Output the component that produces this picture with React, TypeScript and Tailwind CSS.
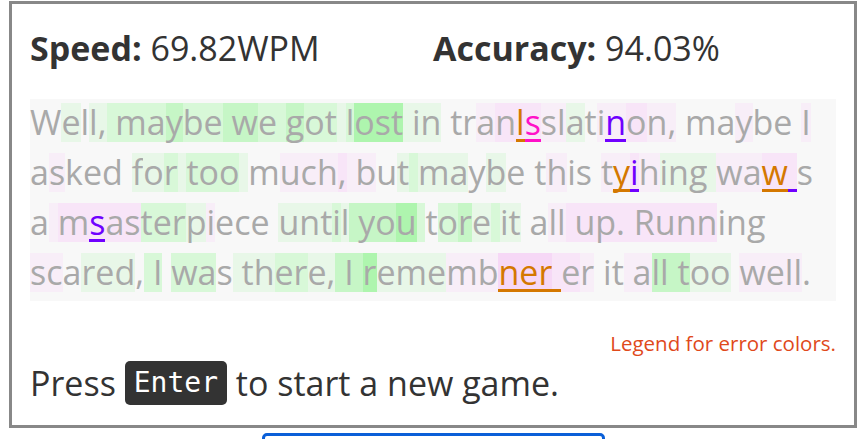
import React from 'react';

type Seg = { text: string; codes: string; err?: 'o' | 'u' | 'm' };

// background shade per typed character
const shade: Record<string, string> = {
  '.': '',
  '1': 'bg-[#e8f7e8]',
  '2': 'bg-[#d8f8d8]',
  '3': 'bg-[#c6f6c6]',
  '4': 'bg-[#aef5ae]',
  a: 'bg-[#f8eef8]',
  b: 'bg-[#f8e5f8]',
  c: 'bg-[#f6d8f6]',
};

const errStyle: Record<string, string> = {
  o: 'text-[#d47800] border-[#d47800]',
  u: 'text-[#7000ff] border-[#7000ff]',
  m: 'text-[#ff10c8] border-[#ff10c8]',
};

const lines: Seg[][] = [
  [
    { text: 'Well, maybe we got lost in tran', codes: ['.1.11', '2', '22322', '3', '32', '2', '322', '1', '2444', '1', '11', '.', '..ab'].join('') },
    { text: 'l', codes: 'b', err: 'o' },
    { text: 's', codes: 'b', err: 'm' },
    { text: 'slati', codes: 'aa1.a' },
    { text: 'n', codes: 'a', err: 'u' },
    { text: 'on, maybe I', codes: ['baa', '.', '..a..', '.', 'a'].join('') },
  ],
  [
    { text: 'asked for too much, but maybe this t', codes: ['.a...', '.', '112', '1', '222', '1', '.aaab', 'a', 'a.1', '2', '11.1.', '.', '.a..', '.', 'a'].join('') },
    { text: 'y', codes: 'a', err: 'o' },
    { text: 'i', codes: 'b', err: 'u' },
    { text: 'hing wa', codes: 'a1111aa' },
    { text: 'w', codes: 'b', err: 'o' },
    { text: ' ', codes: 'b', err: 'u' },
    { text: 's', codes: '.' },
  ],
  [
    { text: 'a m', codes: '.ab' },
    { text: 's', codes: 'b', err: 'u' },
    { text: 'asterpiece until you tore it all up. Running', codes: ['bb2221a...', '.', '11121', '3', '334', '2', '.231', '2', '11', '.', '.aa', 'b', 'bbb', 'b', 'bbbb...'].join('') },
  ],
  [
    { text: 'scared, I was there, I rememb', codes: ['aa.111.', '2', '2', '.', '22.', '1', '112211', '3', '3', '3', '4111aa'].join('') },
    { text: 'ner', codes: 'ccc', err: 'o' },
    { text: ' ', codes: 'b', err: 'o' },
    { text: 'er it all too well.', codes: ['ba', '.', '..', 'a', 'a33', '3', '311', '.', 'aaaa.'].join('') },
  ],
];

const PassageLine: React.FC<{ segs: Seg[] }> = ({ segs }) => (
  <div className="h-[50px] pt-[4px] whitespace-pre">
    {segs.map((seg, si) =>
      seg.text.split('').map((ch, ci) => (
        <span
          key={`${si}-${ci}`}
          className={`inline-block align-top h-[39px] leading-[39px] ${shade[seg.codes[ci] || '.']} ${
            seg.err ? `border-b-[3px] ${errStyle[seg.err]}` : ''
          }`}
        >
          {ch}
        </span>
      ))
    )}
  </div>
);

export default function App() {
  return (
    <div className="bg-white w-[860px] h-[439px] overflow-hidden font-['Open_Sans',sans-serif]">
      <div className="ml-[9px] mt-[1px] w-[848px] h-[427px] border-[3px] border-[#888] px-[18px] text-[#333]">
        {/* Stats */}
        <div className="grid grid-cols-2 h-[95px] pt-[19px] text-[34px] leading-[50px]">
          <div>
            <span className="font-bold">Speed:</span> 69.82WPM
          </div>
          <div>
            <span className="font-bold">Accuracy:</span> 94.03%
          </div>
        </div>

        {/* Passage */}
        <div className="bg-[#f8f8f8] h-[202px] text-[34px] text-[#a9a9a9]">
          {lines.map((segs, i) => (
            <PassageLine key={i} segs={segs} />
          ))}
        </div>

        <div className="pt-[30px] h-[54px] text-right text-[20.5px] leading-[24px] text-[#e0491b]">
          Legend for error colors.
        </div>

        <div className="mt-[6px] h-[44px] text-[34px] leading-[44px]">
          Press{' '}
          <kbd className="inline-block align-top h-[44px] leading-[44px] px-[9px] rounded-[5px] bg-[#333] text-white text-[28px] font-['DejaVu_Sans_Mono',monospace]">
            Enter
          </kbd>{' '}
          to start a new game.
        </div>
      </div>
      <div className="ml-[262px] mt-[5px] w-[343px] h-[20px] border-[3px] border-[#0a5fd8] rounded-t-[5px]" />
    </div>
  );
}
